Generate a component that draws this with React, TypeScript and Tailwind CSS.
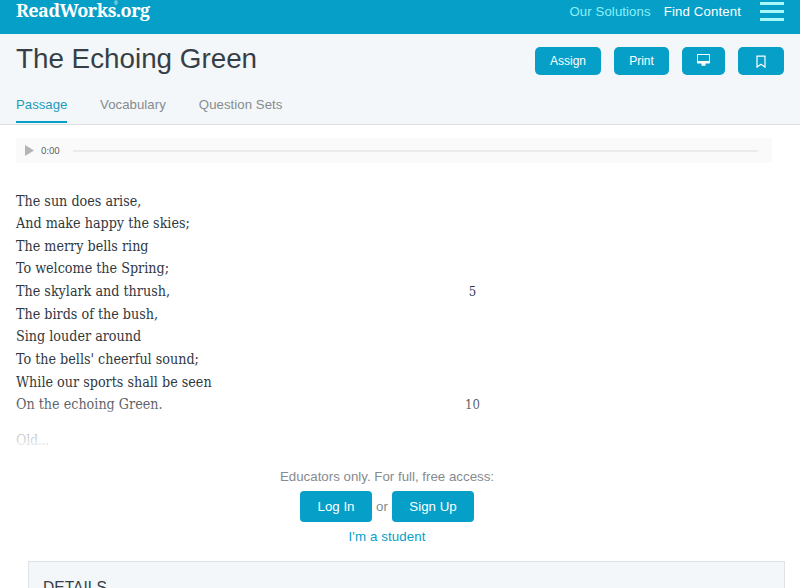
import React from 'react';

interface PoemLine {
  text: string;
  number?: string;
}

const lines: PoemLine[] = [
  { text: 'The sun does arise,' },
  { text: 'And make happy the skies;' },
  { text: 'The merry bells ring' },
  { text: 'To welcome the Spring;' },
  { text: 'The skylark and thrush,', number: '5' },
  { text: 'The birds of the bush,' },
  { text: 'Sing louder around' },
  { text: "To the bells' cheerful sound;" },
  { text: 'While our sports shall be seen' },
  { text: 'On the echoing Green.', number: '10' },
];

const Header: React.FC = () => (
  <header className="flex h-[34px] items-start justify-between bg-[#069fc8] pl-4 pr-4">
    {/* Logo */}
    <div className="relative -mt-[3px] whitespace-nowrap font-['Noto_Serif','DejaVu_Serif_Condensed','DejaVu_Serif',serif] text-[18px] font-bold leading-[26px] tracking-[-0.5px] text-white">
      ReadWorks.org
      <span className="absolute left-[98px] top-[4px] font-['Liberation_Sans',sans-serif] text-[5px] font-normal leading-none tracking-normal">®</span>
    </div>

    {/* Navigation */}
    <nav className="flex items-start text-[13.2px] leading-[23px]">
      <a className="mr-[13px] tracking-[0.1px] text-[#8df0f5]">Our Solutions</a>
      <a className="mr-[19px] tracking-[0.15px] text-white">Find Content</a>
      <div className="mt-[2px] flex w-6 flex-col gap-[5px]">
        <span className="h-[3px] bg-[#a9f9fa]" />
        <span className="h-[3px] bg-[#a9f9fa]" />
        <span className="h-[3px] bg-[#a9f9fa]" />
      </div>
    </nav>
  </header>
);

const TitleBar: React.FC = () => (
  <section className="h-[91px] border-b border-[#dadfe1] bg-[#f3f7f9] px-4">
    <div className="flex h-[52px] items-start justify-between">
      <h1 className="pt-[9px] text-[27.8px] leading-8 text-[#363f47]">The Echoing Green</h1>
      <div className="flex pt-[13px] text-[12px] text-white">
        <button className="mr-[13px] h-7 w-[66px] rounded-[5px] bg-[#069fc8]">Assign</button>
        <button className="mr-[13px] h-7 w-[55px] rounded-[5px] bg-[#069fc8]">Print</button>
        <button className="mr-[13px] flex h-7 w-[43px] items-start justify-center rounded-[5px] bg-[#069fc8] pt-[7px]">
          <svg width="13" height="12" viewBox="0 0 13 12" fill="#fff">
            <path fillRule="evenodd" d="M.6 0h11.8a.6.6 0 0 1 .6.6v8.2a.6.6 0 0 1-.6.6H8.5v2.3h-4V9.4H.6a.6.6 0 0 1-.6-.6V.6A.6.6 0 0 1 .6 0zM1 1v6h11V1z" />
          </svg>
        </button>
        <button className="flex h-7 w-[46px] items-start justify-center rounded-[5px] bg-[#069fc8] pt-2">
          <svg width="10" height="13" viewBox="0 0 10 13" fill="none" stroke="#fff" strokeWidth="1.2">
            <path d="M1 1.1h8v11L5 9.2l-4 2.9z" />
          </svg>
        </button>
      </div>
    </div>

    {/* Tabs */}
    <div className="flex h-[37px] text-[13.2px] leading-[38px] text-[#858b8f]">
      <a className="mr-[33px] h-[37px] w-[51px] border-b-2 border-[#069fc8] text-[#229bbb]">Passage</a>
      <a className="mr-[33px] tracking-[0.06px]">Vocabulary</a>
      <a className="tracking-[0.06px]">Question Sets</a>
    </div>
  </section>
);

const AudioPlayer: React.FC = () => (
  <div className="ml-4 mt-[13px] flex h-[25px] w-[756px] items-center bg-[#fafafa] pl-[9px] pr-[14px]">
    <svg width="9" height="11" viewBox="0 0 9 11" fill="#b5b5b5">
      <path d="M0 0l9 5.5L0 11z" />
    </svg>
    <span className="ml-[7px] w-8 pt-px font-['Open_Sans','Noto_Sans',sans-serif] text-[9.5px] text-[#555]">0:00</span>
    <div className="h-[2px] flex-1 bg-[#ebebeb]" />
  </div>
);

const Passage: React.FC = () => (
  <article className="relative mt-[26px] h-[270px] pl-4 pt-[0.5px] font-['DejaVu_Serif_Condensed','DejaVu_Serif',serif] text-[14.2px] leading-[22.65px] text-[#30383f]">
    {lines.map((line) => (
      <div key={line.text} className="flex h-[22.65px]">
        <span className="w-[440px]">{line.text}</span>
        {line.number && <span className="w-[33px] pt-px text-center text-[13px]">{line.number}</span>}
      </div>
    ))}
    <div className="mt-[13px] w-[33px] tracking-[-0.3px]">Old...</div>
    {/* Fade out the end of the preview */}
    <div className="absolute inset-x-0 bottom-0 h-[68px] bg-linear-to-b from-white/0 to-white to-90%" />
  </article>
);

const SignInPrompt: React.FC = () => (
  <section className="flex w-[774px] flex-col items-center pt-[9px] text-[13.3px] text-[#858b8f]">
    <p className="leading-[18px]">Educators only. For full, free access:</p>
    <div className="mt-[5px] flex items-center">
      <button className="h-[31px] w-[72px] rounded bg-[#069fc8] text-white">Log In</button>
      <span className="w-5 text-center">or</span>
      <button className="h-[31px] w-[82px] rounded bg-[#069fc8] text-white">Sign Up</button>
    </div>
    <a className="mt-[6px] tracking-[0.1px] leading-[18px] text-[#069fc8]">I'm a student</a>
  </section>
);

const App: React.FC = () => {
  return (
    <div className="h-[588px] w-[800px] overflow-hidden bg-white font-['Liberation_Sans',Arial,sans-serif]">
      <Header />
      <TitleBar />
      <AudioPlayer />
      <Passage />
      <SignInPrompt />

      {/* Details panel */}
      <section className="ml-7 mr-[15px] mt-[15px] h-[60px] border border-[#dfe3e6] bg-[#f3f7f9] pl-[14px] pt-4">
        <h2 className="text-[15.6px] leading-5 text-[#363f47]">DETAILS</h2>
      </section>
    </div>
  );
};

export default App;
